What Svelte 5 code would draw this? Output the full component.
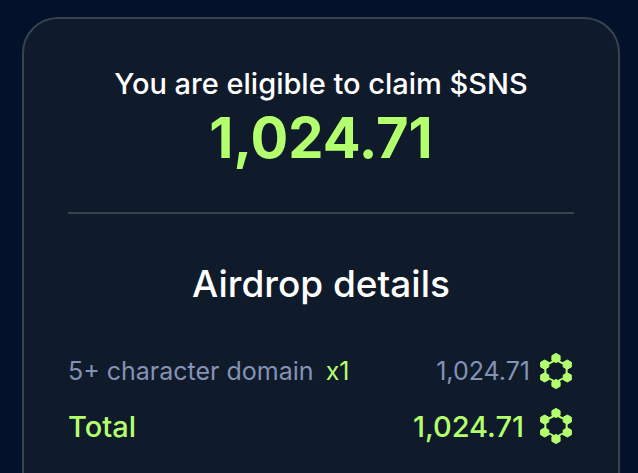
<script lang="ts">
    interface Item {
        label: string;
        count: number;
        amount: number;
    }

    const items: Item[] = [
        { label: "5+ character domain", count: 1, amount: 1024.71 },
    ];

    const total = items.reduce((sum, item) => sum + item.amount, 0);

    // centres of the six hexagons of the token icon
    const nodes = [
        [16, 6],
        [27.3, 12.6],
        [27.3, 25.4],
        [16, 32],
        [4.7, 25.4],
        [4.7, 12.6],
    ];

    function format(amount: number) {
        return amount.toLocaleString("en-US", { minimumFractionDigits: 2 });
    }
</script>

{#snippet token()}
    <svg class="token" viewBox="0 0 34 38" aria-hidden="true">
        <path
            class="ring"
            d="M16 7Q19 10.5 26.8 12.6Q26.4 19 26.8 25.4Q19 27.5 16 31Q13 27.5 5.2 25.4Q5.6 19 5.2 12.6Q13 10.5 16 7Z"
        />
        {#each nodes as [x, y]}
            <path
                class="node"
                d="M{x} {y - 4.6}l4.1 2.3v4.6l-4.1 2.3l-4.1 -2.3v-4.6z"
            />
        {/each}
    </svg>
{/snippet}

<main>
    <section class="card">
        <h1>You are eligible to claim $SNS</h1>
        <p class="claim">{format(total)}</p>
        <hr />
        <h2>Airdrop details</h2>
        <div class="rows">
            {#each items as item}
                <div class="row">
                    <span>{item.label}</span>
                    <span class="count">x{item.count}</span>
                    <span class="amount">{format(item.amount)}</span>
                    {@render token()}
                </div>
            {/each}
            <div class="row total">
                <span>Total</span>
                <span class="amount">{format(total)}</span>
                {@render token()}
            </div>
        </div>
    </section>
</main>

<style>
    :global(body) {
        background: #03112a;
    }

    main {
        box-sizing: border-box;
        height: 100vh;
        padding: 17px 18px 0 22px;
        overflow: hidden;
        background: #03112a;
        color: #ffffff;
        font-family: Inter, "Liberation Sans", sans-serif;
    }

    .card {
        box-sizing: border-box;
        min-height: 120vh;
        padding: 44px;
        border: 2px solid #37444f;
        border-radius: 36px;
        background: #0f1a2b;
        text-align: center;
    }

    h1,
    h2,
    p {
        margin: 0;
        font-weight: 500;
        white-space: nowrap;
    }

    h1 {
        font-size: 29px;
        line-height: 42px;
    }

    .claim {
        color: #b4ff6e;
        font-size: 56px;
        font-weight: 700;
        line-height: 66px;
    }

    hr {
        height: 2px;
        margin: 41px 0 46px;
        border: 0;
        background: #37444f;
    }

    h2 {
        font-size: 37px;
        line-height: 48px;
    }

    .rows {
        display: grid;
        gap: 17px;
        margin-top: 44px;
    }

    .row {
        display: flex;
        align-items: center;
        height: 38px;
        color: #8492b4;
        font-size: 25px;
        white-space: nowrap;
    }

    .count {
        margin-left: 12px;
        color: #b4ff6e;
    }

    .amount {
        margin-left: auto;
    }

    .total {
        color: #b4ff6e;
        font-size: 29px;
        font-weight: 500;
    }

    .token {
        width: 34px;
        height: 38px;
        margin-left: 10px;
    }

    .total .token {
        margin-left: 16px;
    }

    .ring {
        fill: none;
        stroke: #b4ff6e;
        stroke-width: 2;
    }

    .node {
        fill: #b4ff6e;
        stroke: #b4ff6e;
        stroke-linejoin: round;
    }
</style>
